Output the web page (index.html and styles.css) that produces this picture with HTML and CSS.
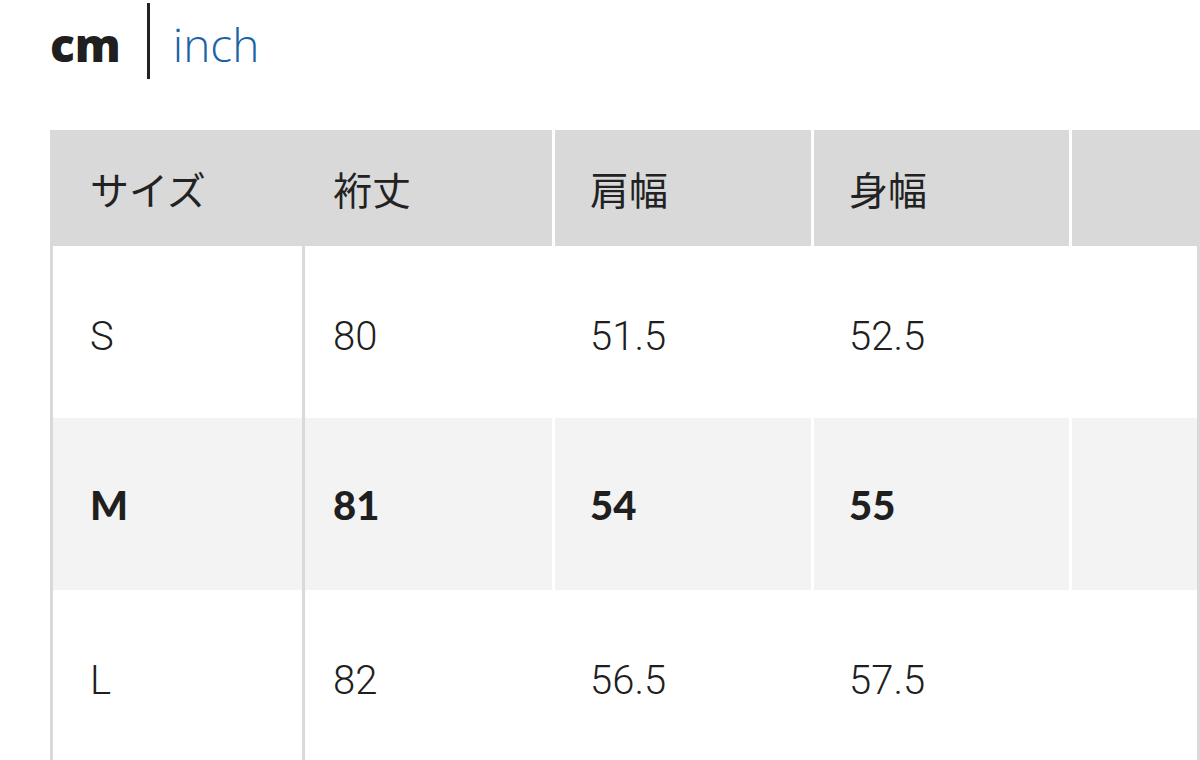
FILE: index.html
```html
<!DOCTYPE html>
<html lang="ja">
<head>
<meta charset="utf-8">
<link rel="stylesheet" href="styles.css">
</head>
<body>
<div class="page">
  <div class="units">
    <span class="unit unit-active">cm</span>
    <span class="unit-divider"></span>
    <span class="unit unit-link">inch</span>
  </div>
  <div class="table">
    <div class="row row-head">
      <div class="cell c1 head">サイズ</div>
      <div class="cell c2 head">裄丈</div>
      <div class="cell c3 head sep">肩幅</div>
      <div class="cell c4 head sep">身幅</div>
      <div class="cell c5 head sep"></div>
    </div>
    <div class="row">
      <div class="cell c1 first">S</div>
      <div class="cell c2">80</div>
      <div class="cell c3 sep">51.5</div>
      <div class="cell c4 sep">52.5</div>
      <div class="cell c5 sep last"></div>
    </div>
    <div class="row row-selected">
      <div class="cell c1 first">M</div>
      <div class="cell c2">81</div>
      <div class="cell c3 sep">54</div>
      <div class="cell c4 sep">55</div>
      <div class="cell c5 sep last"></div>
    </div>
    <div class="row">
      <div class="cell c1 first">L</div>
      <div class="cell c2">82</div>
      <div class="cell c3 sep">56.5</div>
      <div class="cell c4 sep">57.5</div>
      <div class="cell c5 sep last"></div>
    </div>
  </div>
</div>
</body>
</html>
```

FILE: styles.css
```css
html, body {
  margin: 0;
  padding: 0;
  background: #ffffff;
  overflow: hidden;
}
body {
  width: 1200px;
  height: 760px;
  color: #1f1f1f;
  font-family: Roboto, "Noto Sans CJK JP", sans-serif;
}
.page {
  padding-left: 50px;
}
.units {
  display: flex;
  align-items: center;
  height: 82px;
}
.unit {
  font-family: "Open Sans", sans-serif;
  font-size: 46px;
  line-height: 1;
  padding-top: 6px;
}
.unit-active {
  font-weight: 800;
  color: #1f1f1f;
}
.unit-link {
  font-weight: 300;
  color: #1b62a8;
}
.unit-divider {
  width: 3px;
  height: 76px;
  background: #222222;
  margin: 0 23px 0 26px;
}
.table {
  margin-top: 48px;
}
.row {
  display: grid;
  grid-template-columns: 255px 247px 259px 258px 1fr;
  height: 172px;
  background: #ffffff;
}
.row-head {
  height: 116px;
  background: #d9d9d9;
}
.row-selected {
  background: #f3f3f3;
}
.cell {
  display: flex;
  align-items: center;
  font-size: 40px;
  font-weight: 300;
  padding-top: 8px;
}
.head {
  font-family: "Noto Sans CJK JP", sans-serif;
  font-size: 39px;
  font-weight: 400;
  color: #222222;
  padding-top: 0;
}
.row-selected .cell {
  font-family: Lato, sans-serif;
  font-weight: 900;
  font-size: 40px;
  padding-top: 2px;
}
.c1 {
  padding-left: 40px;
}
.c2 {
  padding-left: 28px;
}
.c3, .c4 {
  padding-left: 35px;
}
.sep {
  border-left: 3px solid #ffffff;
}
.first {
  border-left: 3px solid #d9d9d9;
  border-right: 3px solid #d9d9d9;
  padding-left: 37px;
}
.last {
  border-right: 3px solid #d9d9d9;
}
```
